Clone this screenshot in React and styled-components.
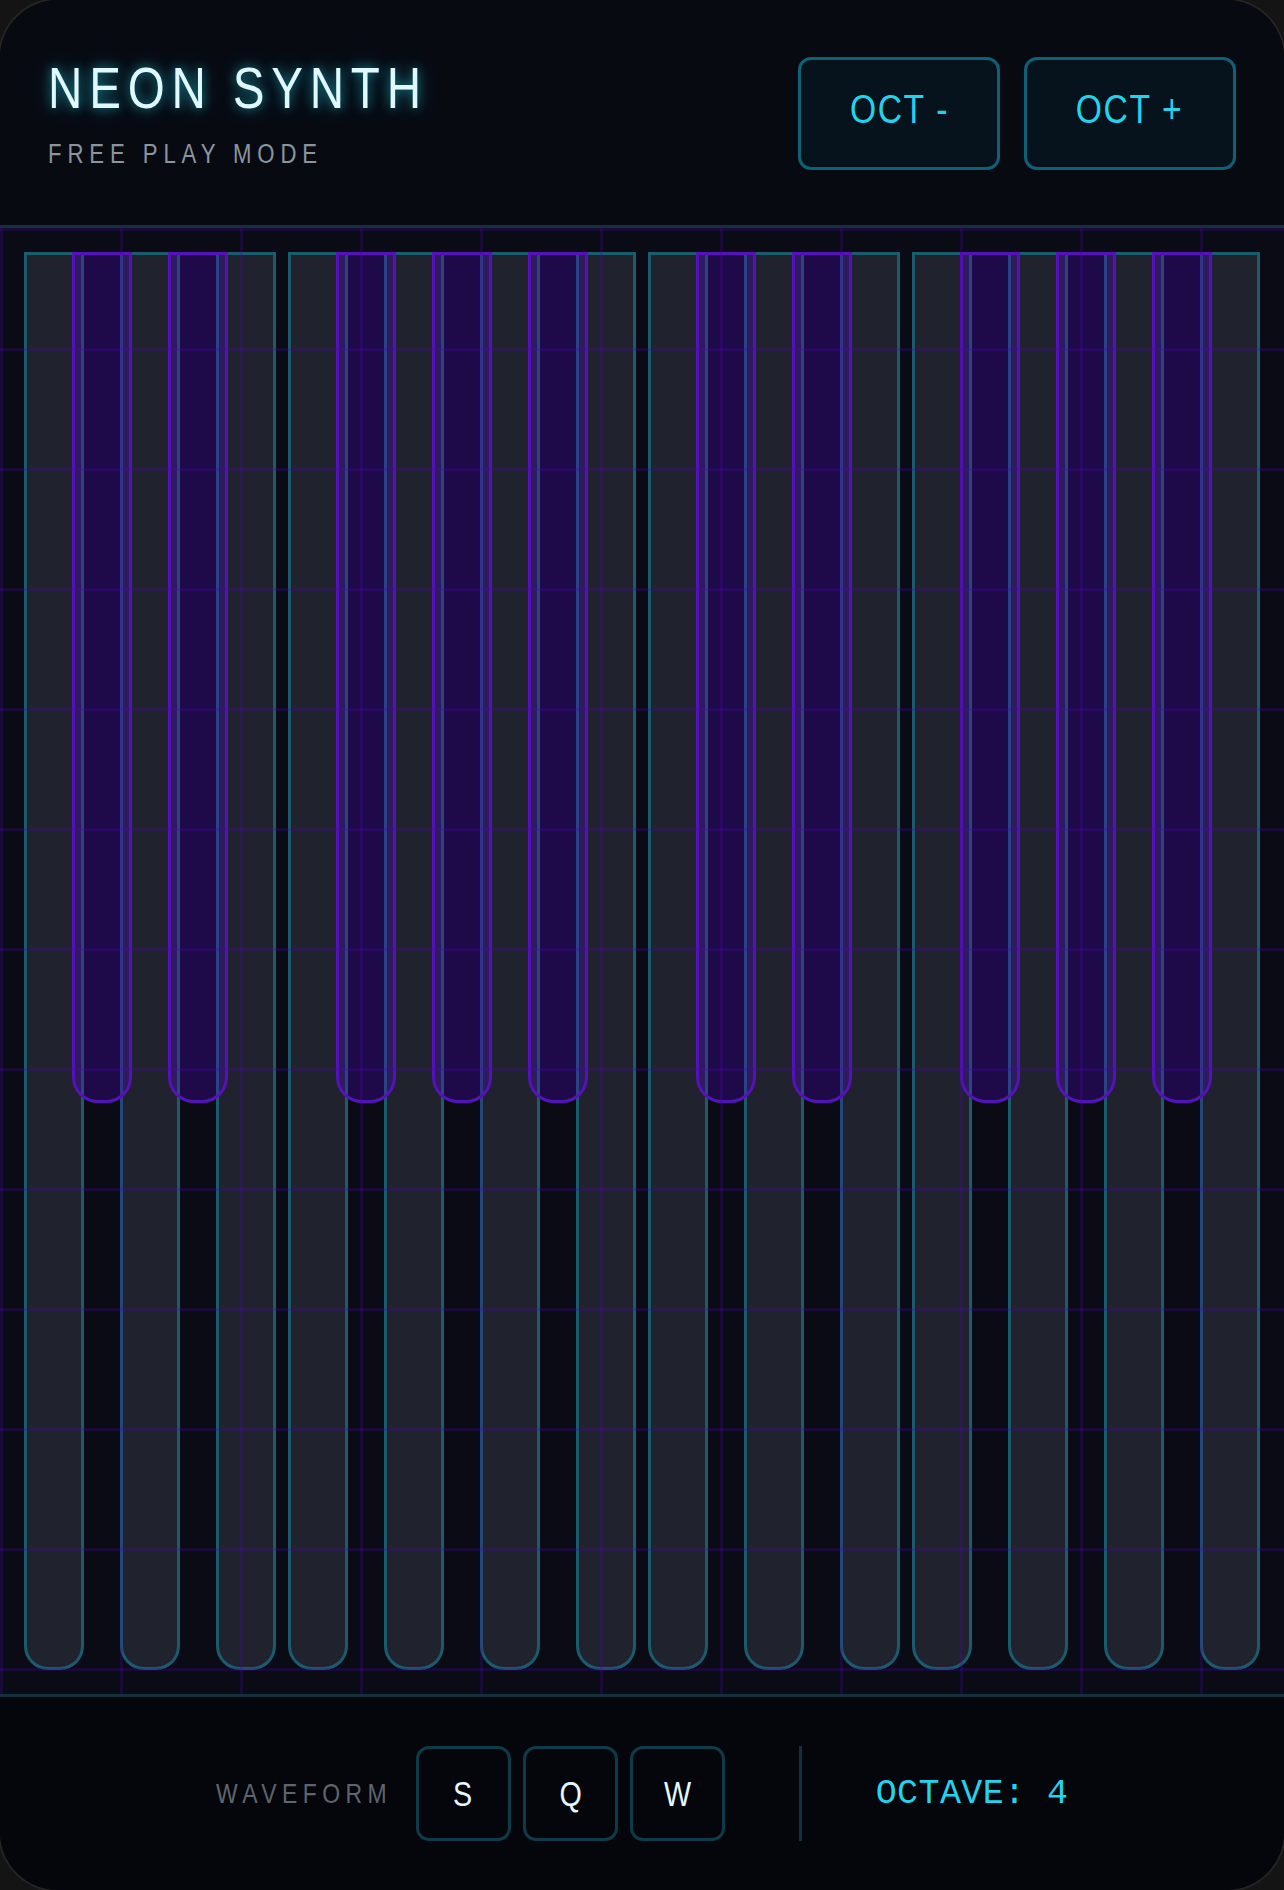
import React from 'react';
import styled, { createGlobalStyle } from 'styled-components';

const SANS = '"Liberation Sans Narrow", "Liberation Sans", Arial, sans-serif';
const MONO = '"Liberation Mono", "DejaVu Sans Mono", monospace';

const GlobalStyle = createGlobalStyle`
  html, body {
    margin: 0;
    padding: 0;
    background: #141414;
  }
  * { box-sizing: border-box; }
`;

const NOTES = ['C', 'C#', 'D', 'D#', 'E', 'F', 'F#', 'G', 'G#', 'A', 'A#', 'B'];
const KEYS = [4, 5].flatMap((oct) =>
  NOTES.map((n) => ({ id: n + oct, black: n.includes('#') }))
);

function App() {
  return (
    <>
      <GlobalStyle />
      <Frame>
        <Header>
          <TitleBlock>
            <Title>
              <Narrow>NEON SYNTH</Narrow>
            </Title>
            <Subtitle>
              <Narrow>FREE PLAY MODE</Narrow>
            </Subtitle>
          </TitleBlock>
          <OctButtons>
            <OctButton $w={202}>
              <Narrow $origin="center">OCT -</Narrow>
            </OctButton>
            <OctButton $w={212}>
              <Narrow $origin="center">OCT +</Narrow>
            </OctButton>
          </OctButtons>
        </Header>

        <Keyboard>
          <KeyRow>
            {KEYS.map((k) =>
              k.black ? <BlackKey key={k.id} /> : <WhiteKey key={k.id} />
            )}
          </KeyRow>
          <GridOverlay />
        </Keyboard>

        <Footer>
          <WaveGroup>
            <WaveLabel>
              <Narrow>WAVEFORM</Narrow>
            </WaveLabel>
            <WaveButton>
              <Narrow $origin="center">S</Narrow>
            </WaveButton>
            <WaveButton>
              <Narrow $origin="center">Q</Narrow>
            </WaveButton>
            <WaveButton>
              <Narrow $origin="center">W</Narrow>
            </WaveButton>
          </WaveGroup>
          <Divider />
          <OctaveReadout>OCTAVE: 4</OctaveReadout>
        </Footer>
      </Frame>
    </>
  );
}

export default App;

// narrow face is not installed, so squeeze the regular one
const Narrow = styled.span`
  display: inline-block;
  white-space: nowrap;
  transform: scaleX(0.82);
  transform-origin: ${(p) => p.$origin || 'left'} center;
`;

const Frame = styled.div`
  width: 100%;
  height: 100vh;
  display: flex;
  flex-direction: column;
  border-radius: 58px;
  overflow: hidden;
  background: #080a12;
  box-shadow: 0 0 0 2px #242424;
`;

const Header = styled.div`
  flex: 0 0 228px;
  padding: 2px 48px 0;
  display: flex;
  align-items: center;
  justify-content: space-between;
  background: #080a12;
  border-bottom: 3px solid #13313d;
`;

const TitleBlock = styled.div`
  display: flex;
  flex-direction: column;
`;

const Title = styled.h1`
  margin: 0;
  font-family: ${SANS};
  font-weight: 400;
  font-size: 58px;
  line-height: 1;
  letter-spacing: 8.3px;
  color: #e0f8ff;
  text-shadow: 0 0 12px rgba(34, 211, 238, 0.6), 0 0 26px rgba(34, 211, 238, 0.3);
`;

const Subtitle = styled.div`
  margin-top: 24px;
  font-family: ${SANS};
  font-size: 27px;
  line-height: 1;
  letter-spacing: 7.2px;
  color: #8b959e;
`;

const OctButtons = styled.div`
  display: flex;
  gap: 24px;
`;

const OctButton = styled.button`
  width: ${(p) => p.$w}px;
  height: 113px;
  padding: 0 0 8px;
  display: flex;
  align-items: center;
  justify-content: center;
  border: 3px solid #0e6276;
  border-radius: 13px;
  background: #07131c;
  color: #22d3ee;
  font-family: ${SANS};
  font-size: 41px;
  letter-spacing: 2px;
  cursor: pointer;
`;

const Keyboard = styled.div`
  flex: 1;
  position: relative;
  padding: 24px;
  background: #0a0b14;
  border-bottom: 3px solid #13313d;
`;

const KeyRow = styled.div`
  display: flex;
  gap: 12px;
  height: 100%;
`;

const WhiteKey = styled.div`
  flex: 0 0 60px;
  background: #20232e;
  border: 3px solid #1a5c6c;
  border-radius: 0 0 24px 24px;
`;

const BlackKey = styled.div`
  flex: 0 0 60px;
  height: 851px;
  margin: 0 -24px;
  position: relative;
  z-index: 2;
  background: rgba(80, 10, 200, 0.3);
  border: 3px solid #5512b8;
  border-radius: 0 0 26px 26px;
`;

const GridOverlay = styled.div`
  position: absolute;
  inset: 0;
  z-index: 3;
  pointer-events: none;
  background-image:
    linear-gradient(to right, rgba(70, 10, 160, 0.25) 3px, transparent 3px),
    linear-gradient(to bottom, rgba(70, 10, 160, 0.25) 3px, transparent 3px);
  background-size: 120px 120px;
`;

const Footer = styled.div`
  flex: 0 0 193px;
  display: flex;
  align-items: center;
  justify-content: center;
  gap: 74px;
  background: #05060b;
`;

const WaveGroup = styled.div`
  display: flex;
  align-items: center;
  gap: 12px;
`;

const WaveLabel = styled.span`
  width: 178px;
  margin-right: 10px;
  font-family: ${SANS};
  font-size: 28px;
  letter-spacing: 6.6px;
  color: #5e656e;
`;

const WaveButton = styled.button`
  width: 95px;
  height: 95px;
  padding: 0;
  display: flex;
  align-items: center;
  justify-content: center;
  border: 3px solid #0d3c48;
  border-radius: 13px;
  background: transparent;
  color: #e6f8ff;
  font-family: ${SANS};
  font-size: 35px;
  cursor: pointer;
`;

const Divider = styled.div`
  width: 3px;
  height: 95px;
  background: #0e3340;
`;

const OctaveReadout = styled.div`
  font-family: ${MONO};
  font-size: 35px;
  letter-spacing: 0.4px;
  color: #22d3ee;
`;
